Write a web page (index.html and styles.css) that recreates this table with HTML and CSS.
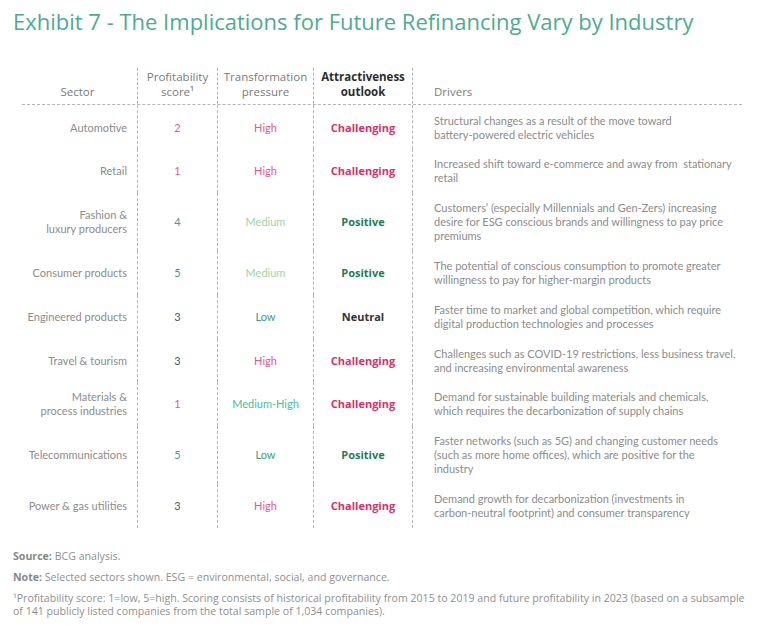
FILE: index.html
```html
<!DOCTYPE html>
<html lang="en">
<head>
<meta charset="utf-8">
<title>Exhibit 7</title>
<link rel="stylesheet" href="styles.css">
</head>
<body>
<div class="page">
  <h1 class="title">Exhibit 7 - The Implications for Future Refinancing Vary by Industry</h1>

  <div class="table">
    <div class="row head">
      <div class="cell sector hsector">Sector</div>
      <div class="cell mid">Profitability<br>score¹</div>
      <div class="cell mid">Transformation<br>pressure</div>
      <div class="cell mid strong">Attractiveness<br>outlook</div>
      <div class="cell drivers hdrivers">Drivers</div>
    </div>

    <div class="row first">
      <div class="cell sector">Automotive</div>
      <div class="cell mid red">2</div>
      <div class="cell mid red">High</div>
      <div class="cell mid chal">Challenging</div>
      <div class="cell drivers">Structural changes as a result of the move toward<br>battery-powered electric vehicles</div>
    </div>

    <div class="row">
      <div class="cell sector">Retail</div>
      <div class="cell mid red">1</div>
      <div class="cell mid red">High</div>
      <div class="cell mid chal">Challenging</div>
      <div class="cell drivers">Increased shift toward e-commerce and away from&nbsp; stationary<br>retail</div>
    </div>

    <div class="row">
      <div class="cell sector">Fashion &amp;<br>luxury producers</div>
      <div class="cell mid teal">4</div>
      <div class="cell mid lgreen">Medium</div>
      <div class="cell mid pos">Positive</div>
      <div class="cell drivers">Customers’ (especially Millennials and Gen-Zers) increasing<br>desire for ESG conscious brands and willingness to pay price<br>premiums</div>
    </div>

    <div class="row">
      <div class="cell sector">Consumer products</div>
      <div class="cell mid teal">5</div>
      <div class="cell mid lgreen">Medium</div>
      <div class="cell mid pos">Positive</div>
      <div class="cell drivers">The potential of conscious consumption to promote greater<br>willingness to pay for higher-margin products</div>
    </div>

    <div class="row">
      <div class="cell sector">Engineered products</div>
      <div class="cell mid dark">3</div>
      <div class="cell mid teal">Low</div>
      <div class="cell mid neu">Neutral</div>
      <div class="cell drivers">Faster time to market and global competition, which require<br>digital production technologies and processes</div>
    </div>

    <div class="row">
      <div class="cell sector">Travel &amp; tourism</div>
      <div class="cell mid dark">3</div>
      <div class="cell mid red">High</div>
      <div class="cell mid chal">Challenging</div>
      <div class="cell drivers">Challenges such as COVID-19 restrictions, less business travel,<br>and increasing environmental awareness</div>
    </div>

    <div class="row">
      <div class="cell sector">Materials &amp;<br>process industries</div>
      <div class="cell mid red">1</div>
      <div class="cell mid mgreen">Medium-High</div>
      <div class="cell mid chal">Challenging</div>
      <div class="cell drivers">Demand for sustainable building materials and chemicals,<br>which requires the decarbonization of supply chains</div>
    </div>

    <div class="row">
      <div class="cell sector">Telecommunications</div>
      <div class="cell mid teal">5</div>
      <div class="cell mid teal">Low</div>
      <div class="cell mid pos">Positive</div>
      <div class="cell drivers">Faster networks (such as 5G) and changing customer needs<br>(such as more home offices), which are positive for the<br>industry</div>
    </div>

    <div class="row last">
      <div class="cell sector">Power &amp; gas utilities</div>
      <div class="cell mid dark">3</div>
      <div class="cell mid red">High</div>
      <div class="cell mid chal">Challenging</div>
      <div class="cell drivers">Demand growth for decarbonization (investments in<br>carbon-neutral footprint) and consumer transparency</div>
    </div>
  </div>

  <div class="notes">
    <p class="note"><b>Source:</b> BCG analysis.</p>
    <p class="note"><b>Note:</b> Selected sectors shown. ESG = environmental, social, and governance.</p>
    <p class="note foot">¹Profitability score: 1=low, 5=high. Scoring consists of historical profitability from 2015 to 2019 and future profitability in 2023 (based on a subsample<br>of 141 publicly listed companies from the total sample of 1,034 companies).</p>
  </div>
</div>
</body>
</html>
```

FILE: styles.css
```css
* { box-sizing: border-box; }
html, body { margin: 0; padding: 0; background: #fff; }
body { font-family: "Lato", "Open Sans", sans-serif; }

.page { padding: 0 4px 0 13px; }

.title {
  margin: 0;
  padding-top: 6px;
  font-family: "Open Sans", sans-serif;
  font-weight: 400;
  font-size: 22px;
  line-height: 30px;
  color: #4eab8f;
  white-space: nowrap;
}

.table {
  margin: 32px 0 0 9px;
  width: 720px;
}

.row {
  display: grid;
  grid-template-columns: 115px 80px 96px 99px 330px;
}

.cell {
  padding: 7.9px 0;
  font-size: 11px;
  line-height: 14px;
  display: flex;
  flex-direction: column;
  justify-content: center;
}
.row .cell + .cell { border-left: 1px dashed #b5b5b5; }

.row.first .cell { padding-top: 8.6px; }

.head { border-bottom: 1px dashed #b5b5b5; }
.head .cell {
  justify-content: flex-end;
  padding: 0 0 5px;
  font-family: "Open Sans", sans-serif;
  font-size: 11.5px;
  line-height: 15px;
  color: #7a7a7a;
  height: 36px;
}
.head .cell.strong {
  font-weight: 700;
  font-size: 11.5px;
  color: #2e2e2e;
}

.sector {
  text-align: right;
  padding-right: 10px !important;
  color: #8c8c8c;
}
.head .hsector { text-align: center; padding-right: 4px !important; }

.mid { text-align: center; }
.drivers { padding-left: 21px !important; color: #8c8c8c; }
.head .hdrivers { padding-left: 21px; }

.red { color: #e45a8a; }
.chal, .pos, .neu {
  font-family: "Open Sans", sans-serif;
  font-weight: 700;
  font-size: 11px;
}
.chal { color: #d9306a; }
.teal { color: #3d9d7e; }
.lgreen { color: #9fd39b; }
.mgreen { color: #4cbd9b; }
.pos { color: #1f7c58; }
.neu { color: #333; }
.dark { color: #555; }

.notes { margin-top: 22px; }
.note {
  margin: 0 0 8px;
  font-family: "Open Sans", sans-serif;
  font-size: 10.6px;
  line-height: 13px;
  color: #8f8f8f;
  white-space: nowrap;
}
.note b { color: #888; font-weight: 700; }
```
